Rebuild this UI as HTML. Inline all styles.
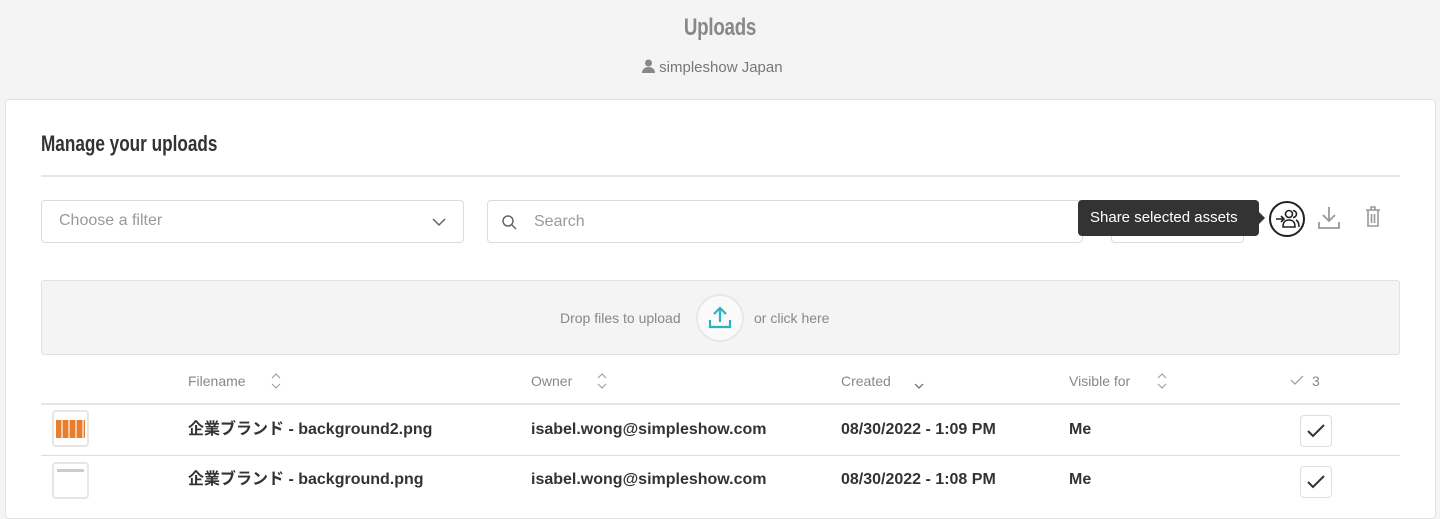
<!DOCTYPE html>
<html><head><meta charset="utf-8"><style>
*{box-sizing:border-box;margin:0;padding:0}
body{width:1440px;height:505px;overflow:hidden;background:#f4f4f4;font-family:"Liberation Sans","Noto Sans CJK JP",sans-serif;color:#333;position:relative}
.abs{position:absolute}
.card{left:5px;top:99px;width:1431px;height:420px;background:#fff;border:1px solid #e2e2e2;border-radius:4px}
.box{border:1px solid #dcdcdc;border-radius:4px;background:#fff}
.hd{font-size:14px;color:#888;top:373px}
.row{font-size:16px;font-weight:bold;color:#333;line-height:20px;height:20px}
.thumb{width:37px;height:37px;border:2px solid #e6e6e6;border-radius:4px;background:#fff;overflow:hidden}
.cb{width:32px;height:32px;border:1px solid #ddd;border-radius:4px;left:1300px}
.srt{top:373px}
</style></head><body>
<div class="abs" style="left:620px;width:200px;top:14px;text-align:center;font-size:24px;color:#888;transform:scaleX(0.78);font-weight:bold;letter-spacing:-0.3px">Uploads</div>
<div class="abs" style="left:642px;top:59px;font-size:15px;color:#777">
<svg width="13" height="14" viewBox="0 0 13 14" style="vertical-align:-1px"><circle cx="6.5" cy="4" r="3.5" fill="#888"/><path d="M0 14c0-4 3-6 6.5-6s6.5 2 6.5 6z" fill="#888"/></svg> simpleshow Japan</div>
<div class="abs card"></div>
<div class="abs" style="left:41px;top:131px;font-size:22px;color:#333;transform:scaleX(0.78);transform-origin:0 0;font-weight:bold;white-space:nowrap">Manage your uploads</div>
<div class="abs" style="left:41px;top:175px;width:1359px;height:2px;background:#e6e6e6"></div>
<div class="abs box" style="left:41px;top:200px;width:423px;height:43px"><span class="abs" style="left:17px;top:11px;font-size:16px;color:#999">Choose a filter</span>
<svg class="abs" style="left:390px;top:17px" width="14" height="9" viewBox="0 0 14 9"><path d="M1 1l6 6 6-6" stroke="#666" stroke-width="1.5" fill="none"/></svg></div>
<div class="abs box" style="left:487px;top:200px;width:596px;height:43px"><svg class="abs" style="left:14px;top:14px" width="15" height="15" viewBox="0 0 15 15"><circle cx="6" cy="6" r="5" stroke="#666" stroke-width="1.5" fill="none"/><path d="M10 10l4 4" stroke="#666" stroke-width="1.5"/></svg><span class="abs" style="left:46px;top:12px;font-size:16px;color:#999">Search</span></div>
<div class="abs box" style="left:1111px;top:200px;width:133px;height:43px"></div>
<div class="abs" style="left:1078px;top:200px;width:181px;height:36px;background:#333;border-radius:4px;color:#fff;font-size:15px;line-height:36px;padding-left:12px">Share selected assets</div>
<div class="abs" style="left:1259px;top:212px;width:0;height:0;border-top:6px solid transparent;border-bottom:6px solid transparent;border-left:6px solid #333"></div>
<svg class="abs" style="left:1268px;top:200px" width="38" height="38" viewBox="0 0 38 38"><circle cx="19" cy="19" r="17" stroke="#222" stroke-width="2" fill="none"/><path d="M8 19h8M13 16l3 3-3 3" stroke="#222" stroke-width="1.6" fill="none"/><circle cx="21" cy="14" r="3.5" stroke="#222" stroke-width="1.6" fill="none"/><path d="M15 27c0-5 2-7 6-7s6 2 6 7z" stroke="#222" stroke-width="1.6" fill="none"/><path d="M25 10.5a3.5 3.5 0 0 1 0 7M28 20c2 1 3 3 3 7" stroke="#222" stroke-width="1.6" fill="none"/></svg>
<svg class="abs" style="left:1318px;top:206px" width="22" height="24" viewBox="0 0 22 24"><path d="M11 1v14M5 9l6 6 6-6M1 16v6h20v-6" stroke="#999" stroke-width="1.8" fill="none"/></svg>
<svg class="abs" style="left:1365px;top:206px" width="16" height="22" viewBox="0 0 16 22"><path d="M1 4h14M6 4V1h4v3M3 4v16h10V4M6.5 8v9M9.5 8v9" stroke="#999" stroke-width="1.6" fill="none"/></svg>
<div class="abs" style="left:41px;top:280px;width:1359px;height:75px;background:#f4f4f4;border:1px solid #e2e2e2;border-radius:3px"></div>
<div class="abs" style="left:560px;top:310px;font-size:14px;color:#888">Drop files to upload</div>
<div class="abs" style="left:696px;top:294px;width:48px;height:48px;border-radius:50%;background:#fafafa;border:2px solid #e8e8e8"></div>
<svg class="abs" style="left:708px;top:305px" width="24" height="24" viewBox="0 0 24 24"><path d="M12 17V3M6 9l6-6 6 6M2 15v7h20v-7" stroke="#2fb0be" stroke-width="2.2" fill="none"/></svg>
<div class="abs" style="left:754px;top:310px;font-size:14px;color:#888">or click here</div>
<div class="abs hd" style="left:188px">Filename</div>
<div class="abs hd" style="left:531px">Owner</div>
<div class="abs hd" style="left:841px">Created</div>
<div class="abs hd" style="left:1069px">Visible for</div>
<svg class="abs srt" style="left:271px" width="10" height="16" viewBox="0 0 10 16"><path d="M1 5l4-4 4 4M1 11l4 4 4-4" stroke="#999" stroke-width="1" fill="none"/></svg>
<svg class="abs srt" style="left:597px" width="10" height="16" viewBox="0 0 10 16"><path d="M1 5l4-4 4 4M1 11l4 4 4-4" stroke="#999" stroke-width="1" fill="none"/></svg>
<svg class="abs srt" style="left:914px" width="10" height="16" viewBox="0 0 10 16"><path d="M1 11l4 4 4-4" stroke="#666" stroke-width="1.2" fill="none"/></svg>
<svg class="abs srt" style="left:1157px" width="10" height="16" viewBox="0 0 10 16"><path d="M1 5l4-4 4 4M1 11l4 4 4-4" stroke="#999" stroke-width="1" fill="none"/></svg>
<svg class="abs" style="left:1290px;top:375px" width="14" height="10" viewBox="0 0 14 10"><path d="M1 5l4 4 8-8" stroke="#999" stroke-width="1.2" fill="none"/></svg>
<div class="abs hd" style="left:1312px">3</div>
<div class="abs" style="left:41px;top:403px;width:1359px;height:2px;background:#e6e6e6"></div>
<div class="abs" style="left:41px;top:455px;width:1359px;height:1px;background:#ddd"></div>
<div class="abs thumb" style="left:52px;top:410px"><div style="margin:8px 2px 0;height:18px;background:repeating-linear-gradient(90deg,#e87d2e 0 5px,#f6c9a3 5px 7px)"></div></div>
<div class="abs thumb" style="left:52px;top:462px"><div style="margin:5px 3px;height:3px;background:#ccc"></div></div>
<div class="abs row" style="left:188px;top:420px">企業ブランド - background2.png</div>
<div class="abs row" style="left:531px;top:420px">isabel.wong@simpleshow.com</div>
<div class="abs row" style="left:841px;top:420px">08/30/2022 - 1:09 PM</div>
<div class="abs row" style="left:1069px;top:420px">Me</div>
<div class="abs row" style="left:188px;top:470px">企業ブランド - background.png</div>
<div class="abs row" style="left:531px;top:470px">isabel.wong@simpleshow.com</div>
<div class="abs row" style="left:841px;top:470px">08/30/2022 - 1:08 PM</div>
<div class="abs row" style="left:1069px;top:470px">Me</div>
<div class="abs cb" style="top:415px"><svg width="30" height="30" viewBox="0 0 30 30"><path d="M7 15l5 5 11-11" stroke="#333" stroke-width="2" fill="none"/></svg></div>
<div class="abs cb" style="top:466px"><svg width="30" height="30" viewBox="0 0 30 30"><path d="M7 15l5 5 11-11" stroke="#333" stroke-width="2" fill="none"/></svg></div>
</body></html>
